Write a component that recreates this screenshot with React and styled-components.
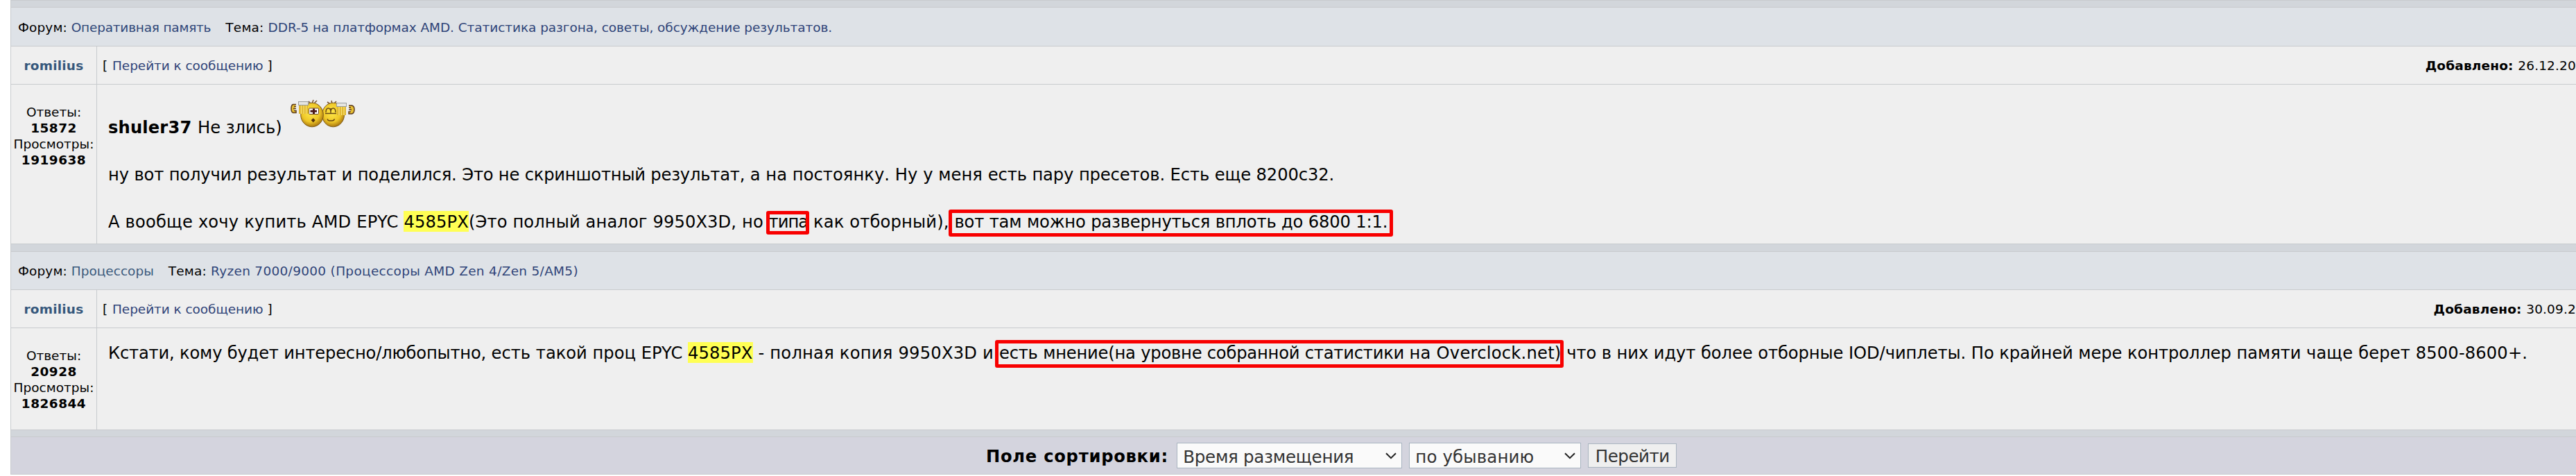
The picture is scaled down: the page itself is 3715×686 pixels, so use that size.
import React from 'react'

import styled, { createGlobalStyle } from 'styled-components'

const posts = [
	{
		forum: { text: 'Оперативная память', track: -0.22, color: '#2f4778' },
		topic: {
			text: 'DDR-5 на платформах AMD. Статистика разгона, советы, обсуждение результатов.',
			track: -0.07,
		},
		author: 'romilius',
		added: '26.12.20',
		replies: '15872',
		views: '1919638',
		stripHeight: 10,
		headHeight: 56,
		bodyHeight: 230,
		bodyPadding: 44.5,
		paragraphs: [
			[
				{ kind: 'bold', text: 'shuler37 ', track: 0.16 },
				{ text: 'Не злись) ' },
				{ kind: 'cheers' },
			],
			[
				{ text: 'ну вот получил результат и поделился. ', track: -0.14 },
				{ text: 'Это не скриншотный результат, ', track: -0.2 },
				{ text: 'а на постоянку. Ну у меня ', track: 0.05 },
				{ text: 'есть пару пресетов. Есть еще 8200с32.', track: -0.1 },
			],
			[
				{ text: 'А вообще хочу купить AMD EPYC ', track: 0.17 },
				{ kind: 'mark', text: '4585PX', track: 0.13 },
				{ text: '(Это полный аналог 9950X3D, но ', track: 0.11 },
				{ kind: 'frame', text: 'типа', track: -1, inset: '-2px -2px -4px -4px' },
				{ text: ' как отборный), ', track: 0.16 },
				{
					kind: 'frame',
					text: 'вот там можно развернуться вплоть до 6800 1:1.',
					track: -0.15,
					inset: '-4px -8px -7px -8px',
				},
			],
		],
	},
	{
		forum: { text: 'Процессоры', track: 0, color: '#3b5a7c' },
		topic: { text: 'Ryzen 7000/9000 (Процессоры AMD Zen 4/Zen 5/AM5)', track: 0.3 },
		author: 'romilius',
		added: '30.09.2',
		replies: '20928',
		views: '1826844',
		stripHeight: 11,
		headHeight: 55,
		bodyHeight: 147,
		bodyPadding: 19,
		paragraphs: [
			[
				{ text: 'Кстати, кому будет интересно/любопытно, ', track: -0.19 },
				{ text: 'есть такой проц EPYC ', track: 0 },
				{ kind: 'mark', text: '4585PX', track: 0.13 },
				{ text: ' - полная копия 9950X3D и ', track: 0.23 },
				{
					kind: 'frame',
					parts: [
						{ text: 'есть мнение(на уровне собранной статистики ', track: -0.21 },
						{ text: 'на Overclock.net)', track: 0.24 },
					],
					inset: '-5px -3px -7px -6px',
				},
				{ text: ' что в них идут более ', track: -0.07 },
				{
					text: 'отборные IOD/чиплеты. По крайней мере контроллер памяти ',
					track: -0.07,
				},
				{ text: 'чаще берет 8500-8600+.', track: 0.14 },
			],
		],
	},
]

function Cheers() {
	return (
		<Smiley width='93' height='42' viewBox='0 0 93 42'>
			<defs>
				<radialGradient id='face' cx='45%' cy='40%' r='60%'>
					<stop offset='0' stopColor='#ffe94a' />
					<stop offset='0.65' stopColor='#eec728' />
					<stop offset='1' stopColor='#ab780f' />
				</radialGradient>
			</defs>
			<path
				d='M29 7l-3-3M31 7l2-5M34 7l4-4M57 8l-4-3M60 8l-1-5M62 8l4-4'
				stroke='#7a5530'
				strokeWidth='1.6'
				fill='none'
			/>
			<ellipse cx='61.5' cy='23.5' rx='16' ry='17.3' fill='url(#face)' stroke='#7c5a18' />
			<ellipse cx='31' cy='23.5' rx='16.3' ry='17.3' fill='url(#face)' stroke='#7c5a18' />
			<rect x='26.5' y='14' width='14' height='8.5' rx='1' fill='#fff' stroke='#684025' />
			<path d='M33.5 14.5v7.5M28.5 18.2h9.500' stroke='#4b1919' strokeWidth='3' />
			<path
				d='M51 20q0-6 3.5-6t3.5 6m0 0q0-6 3.5-6t3.5 6M50 21.5h16M58 14v8'
				stroke='#674815'
				strokeWidth='1.4'
				fill='none'
			/>
			<path d='M32.7 28.2l3 3-3 3.2-3-3.2z' fill='#54300c' />
			<path
				d='M53 29.5q1 2.5 3 2.5h4q2.5 0 3.5-2.5'
				stroke='#654110'
				strokeWidth='1.5'
				fill='none'
			/>
			<rect x='12' y='8' width='13' height='14' fill='#e0b830' />
			<path d='M15.5 9v13M19 9v13M22.5 9v13' stroke='#fae373' strokeWidth='1.2' />
			<rect x='11.5' y='4.5' width='14' height='5' fill='#e5e5e1' stroke='#999c9c' />
			<rect x='67' y='10' width='13' height='14' fill='#e0b830' />
			<path d='M70 11v13M73.5 11v13M77 11v13' stroke='#fae373' strokeWidth='1.2' />
			<rect x='66.5' y='6.5' width='14' height='5' fill='#e5e5e1' stroke='#999c9c' />
			<path
				d='M8 8.5H3.5Q1 9.5 1 14.5T3.5 20.5H8V17.5H5M8 11.5H5M8 14.5H4'
				fill='#e7bf32'
				stroke='#5c3b1c'
				strokeWidth='1.5'
			/>
			<path
				d='M84 10h4.500Q92 11 92 16T88.500 22H84V19h3M84 13h3M84 16h4'
				fill='#e7bf32'
				stroke='#5c3b1c'
				strokeWidth='1.5'
			/>
		</Smiley>
	)
}

function Piece({ piece }) {
	if (piece.kind === 'cheers') return <Cheers />
	if (piece.kind === 'bold') return <Bold $track={piece.track}>{piece.text}</Bold>
	if (piece.kind === 'mark') return <Mark $track={piece.track}>{piece.text}</Mark>
	if (piece.kind === 'frame') {
		return (
			<Frame $track={piece.track} $inset={piece.inset}>
				{piece.parts
					? piece.parts.map((part) => <Piece key={part.text} piece={part} />)
					: piece.text}
			</Frame>
		)
	}
	return <Run $track={piece.track}>{piece.text}</Run>
}

function Post({ post }) {
	return (
		<>
			<Strip $height={post.stripHeight} />
			<TopicRow $height={post.headHeight}>
				<Run $track={0.11}>Форум: </Run>
				<Link $track={post.forum.track} $color={post.forum.color}>
					{post.forum.text}
				</Link>
				<TopicLabel>Тема: </TopicLabel>
				<Link $track={post.topic.track}>{post.topic.text}</Link>
			</TopicRow>
			<PostRow $height={55}>
				<AuthorCell>{post.author}</AuthorCell>
				<MetaCell>
					<span>
						<Run $track={0.45}>[ </Run>
						<Link $track={-0.07}>Перейти к сообщению</Link> ]
					</span>
					<Added>
						<b>Добавлено: </b>
						{post.added}
					</Added>
				</MetaCell>
			</PostRow>
			<PostRow $height={post.bodyHeight}>
				<StatsCell>
					<div>Ответы:</div>
					<Count>{post.replies}</Count>
					<div>Просмотры:</div>
					<Count>{post.views}</Count>
				</StatsCell>
				<Message $top={post.bodyPadding}>
					{post.paragraphs.map((pieces, i) => (
						<Paragraph key={i}>
							{pieces.map((piece, j) => (
								<Piece key={j} piece={piece} />
							))}
						</Paragraph>
					))}
				</Message>
			</PostRow>
		</>
	)
}

function Dropdown({ label, width, track }) {
	return (
		<SelectWrapper $width={width}>
			<Select $track={track}>
				<option>{label}</option>
			</Select>
			<Chevron width='16' height='10' viewBox='0 0 16 10'>
				<path d='M1 1.2l7 7 7-7' fill='none' stroke='#222' strokeWidth='2' />
			</Chevron>
		</SelectWrapper>
	)
}

function App() {
	return (
		<>
			<GlobalStyle />
			<Results>
				{posts.map((post) => (
					<Post key={post.views} post={post} />
				))}
				<Strip $height={10} />
				<SortBar>
					<SortLabel>Поле сортировки:</SortLabel>
					<Dropdown label='Время размещения' width={325} track={-0.28} />
					<Dropdown label='по убыванию' width={248} track={0.11} />
					<GoButton>Перейти</GoButton>
				</SortBar>
			</Results>
		</>
	)
}

const GlobalStyle = createGlobalStyle`
	* {
		box-sizing: border-box;
	}

	body {
		margin: 0;
		background: #fff;
		color: #000;
		font-family: Verdana, 'DejaVu Sans', sans-serif;
		font-size: 18.5px;
		line-height: 23px;
		overflow: hidden;
	}
`

const Results = styled.div`
	margin-left: 15px;
	border-left: 1px solid #c8cbce;
	white-space: pre;
`

const Strip = styled.div`
	height: ${(props) => props.$height}px;
	border-top: 1px solid #c8cbce;
	background: #d2d6db;
`

const TopicRow = styled.div`
	display: flex;
	align-items: center;
	height: ${(props) => props.$height}px;
	padding: 1px 0 0 10px;
	border-top: 1px solid #c8cbce;
	background: #dee2e7;
`

const Run = styled.span`
	letter-spacing: ${(props) => props.$track || 0}px;
`

const Link = styled.a`
	color: ${(props) => props.$color || '#2f4478'};
	letter-spacing: ${(props) => props.$track || 0}px;
	text-decoration: none;
`

const TopicLabel = styled.span`
	margin-left: 21px;
	letter-spacing: 0.2px;
`

const PostRow = styled.div`
	display: flex;
	height: ${(props) => props.$height}px;
	border-top: 1px solid #c8cbce;
	background: #efefef;
`

const SideCell = styled.div`
	flex: none;
	width: 124px;
	border-right: 1px solid #c8cbce;
	text-align: center;
`

const AuthorCell = styled(SideCell)`
	display: flex;
	align-items: center;
	justify-content: center;
	padding-top: 1px;
	color: #36587c;
	font-weight: bold;
	letter-spacing: 0.2px;
`

const MetaCell = styled.div`
	display: flex;
	flex: 1;
	align-items: center;
	justify-content: space-between;
	padding: 1px 0 0 8px;
`

const Added = styled.span`
	letter-spacing: 0.17px;
`

const StatsCell = styled(SideCell)`
	padding-top: 28px;
`

const Count = styled.div`
	font-weight: bold;
	letter-spacing: 0.45px;
`

const Message = styled.div`
	flex: 1;
	padding: ${(props) => props.$top}px 0 0 16px;
	font-size: 24.2px;
	line-height: 34.3px;
`

const Paragraph = styled.p`
	margin: 0 0 34px;
`

const Bold = styled(Run)`
	font-weight: bold;
`

const Mark = styled(Run)`
	padding-top: 2px;
	background: #ffff54;
`

/* red outline drawn over the quoted words */
const Frame = styled(Run)`
	position: relative;

	&::after {
		content: '';
		position: absolute;
		inset: ${(props) => props.$inset};
		border: 5px solid #f80000;
		border-radius: 3px;
	}
`

const Smiley = styled.svg`
	margin: -30px 0 0 4.5px;
	vertical-align: 8px;
`

const SortBar = styled.div`
	display: flex;
	align-items: center;
	height: 55px;
	padding-left: 1406px;
	border: solid #c8cbce;
	border-width: 1px 0;
	background: #d4d4de;
`

const SortLabel = styled.b`
	margin-right: 12.4px;
	padding-top: 4px;
	font-size: 24.2px;
	letter-spacing: 0.75px;
`

const SelectWrapper = styled.div`
	position: relative;
	width: ${(props) => props.$width}px;
	height: 37px;
	margin-right: 10px;
`

const Select = styled.select`
	appearance: none;
	width: 100%;
	height: 100%;
	padding: 3px 0 0 8px;
	border: 1px solid #a9b4c0;
	border-radius: 0;
	background: #fafafa;
	color: #333;
	font: 24.5px Verdana, 'DejaVu Sans', sans-serif;
	letter-spacing: ${(props) => props.$track}px;
`

const Chevron = styled.svg`
	position: absolute;
	top: 14px;
	right: 8px;
	pointer-events: none;
`

const GoButton = styled.button`
	width: 128px;
	height: 35px;
	padding: 2px 0 0;
	border: 1px solid #a9b4c0;
	background: #efefef;
	color: #333;
	font: 24.5px Verdana, 'DejaVu Sans', sans-serif;
	letter-spacing: -0.46px;
	line-height: 30px;
`

export default App
